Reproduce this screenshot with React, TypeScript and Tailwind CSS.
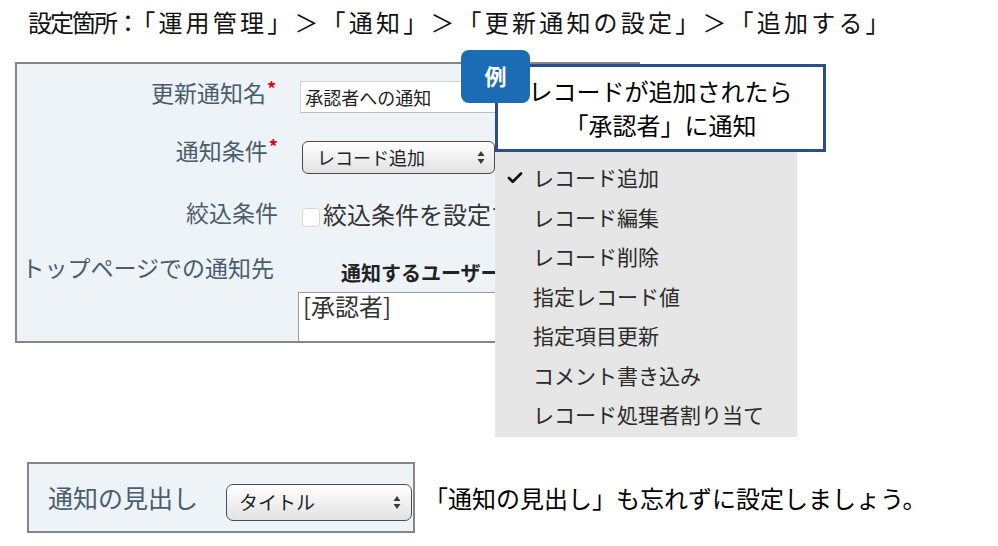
import { Check } from "lucide-react"

function SelectArrows() {
  return (
    <svg width="8" height="15" viewBox="0 0 8 15" className="shrink-0">
      <path d="M4 1 L7.5 6 H0.5 Z" fill="#3a3a3a" />
      <path d="M4 14 L7.5 9 H0.5 Z" fill="#3a3a3a" />
    </svg>
  )
}

function Req() {
  return <span className="relative -top-[6px] ml-[1px] text-[18px] font-bold leading-none text-[#e3001b]">*</span>
}

export default function App() {
  const options = [
    "レコード追加",
    "レコード編集",
    "レコード削除",
    "指定レコード値",
    "指定項目更新",
    "コメント書き込み",
    "レコード処理者割り当て",
  ]

  return (
    <div className="relative h-[546px] w-[998px] overflow-hidden bg-white font-['Noto_Sans_CJK_JP','Noto_Sans',sans-serif] text-[#111]">
      <h1 className="whitespace-nowrap pl-[28px] pt-[6px] text-[24px] font-normal leading-[32px]">
        <span className="tracking-[-2px]">設定箇所</span>
        <span className="tracking-[3.2px]">：「運用管理」＞「通知」＞「更新通知の設定」＞「追加する」</span>
      </h1>

      {/* form panel */}
      <div className="ml-[15px] mt-[24px] h-[281px] w-[625px] overflow-hidden border-2 border-[#868686] bg-[#eef3f7] pt-[17px] text-[#4a5d6e]">
        <div className="flex h-[32px] items-start">
          <div className="w-[261px] text-right text-[23px] leading-[22px]">
            更新通知名<Req />
          </div>
          <div className="ml-[24px] flex h-[32px] w-[340px] items-center border border-[#d4d4d4] border-b-[#bdbdbd] bg-white px-[4px] text-[18px] text-[#222]">
            承認者への通知
          </div>
        </div>

        <div className="mt-[28px] flex h-[33px] items-start">
          <div className="-mt-[2px] w-[261px] text-right text-[23px] leading-[22px]">
            通知条件<Req />
          </div>
          <div className="ml-[24px] flex h-[33px] w-[193px] items-center justify-between rounded-[6px] border border-[#4d4d4d] bg-gradient-to-b from-white to-[#e2e2e2] pl-[14px] pr-[9px] text-[18px] text-[#222]">
            レコード追加
            <SelectArrows />
          </div>
        </div>

        <div className="mt-[24px] flex h-[32px] items-center">
          <div className="-mt-[4px] w-[261px] text-right text-[23px] leading-[28px]">絞込条件</div>
          <div className="ml-[24px] flex items-center text-[24px] text-[#333]">
            <span className="mt-[6px] h-[19px] w-[18px] rounded-[4px] border border-[#d8d8d8] bg-white" />
            <span className="ml-[3px] whitespace-nowrap leading-[32px]">絞込条件を設定する</span>
          </div>
        </div>

        <div className="mt-[29px] flex items-start">
          <div className="-mt-[6px] w-[261px] whitespace-nowrap text-right text-[23px] leading-[28px]">
            トップページでの通知先
          </div>
          <div className="ml-[24px]">
            <div className="whitespace-nowrap pl-[43px] text-[20px] font-bold leading-[28px] text-[#222]">
              通知するユーザー
            </div>
            <div className="mt-[5px] h-[60px] w-[340px] border border-[#9a9a9a] bg-white pl-[4px] text-[24px] leading-[26px] text-[#333]">
              [承認者]
            </div>
          </div>
        </div>
      </div>

      {/* heading setting */}
      <div className="ml-[27px] mt-[119px] flex items-center">
        <div className="flex h-[71px] w-[388px] items-center border-2 border-[#868686] bg-[#eef3f7] pl-[19px]">
          <div className="w-[178px] text-[25px] text-[#4a5d6e]">通知の見出し</div>
          <div className="mt-[10px] flex h-[37px] w-[186px] items-center justify-between rounded-[7px] border border-[#4d4d4d] bg-gradient-to-b from-white to-[#e2e2e2] pl-[12px] pr-[10px] text-[19px] text-[#222]">
            タイトル
            <SelectArrows />
          </div>
        </div>
        <p className="ml-[9px] text-[24px] leading-[32px] text-black">「通知の見出し」も忘れずに設定しましょう。</p>
      </div>

      {/* open dropdown */}
      <div className="absolute left-[495px] top-[143px] h-[294px] w-[302px] bg-[#e6e6e6] pt-[15px] text-[21px] text-[#2b2b2b]">
        {options.map((o, i) => (
          <div key={o} className="flex h-[39.5px] items-center">
            <span className="flex w-[38px] justify-center pl-[2px]">
              {i === 0 && <Check size={18} strokeWidth={3.5} className="text-[#111]" />}
            </span>
            {o}
          </div>
        ))}
      </div>

      {/* callout */}
      <div className="absolute left-[495px] top-[64px] flex h-[88px] w-[331px] flex-col items-center justify-center border-[3px] border-[#2d4e8d] bg-white text-[24px] leading-[34px] text-black">
        <span>レコードが追加されたら</span>
        <span>「承認者」に通知</span>
      </div>

      <div className="absolute left-[461px] top-[50px] flex h-[53px] w-[69px] items-center justify-center rounded-[8px] bg-[#1b6cb5] pb-[2px] text-[22px] font-bold text-white">
        例
      </div>
    </div>
  )
}
